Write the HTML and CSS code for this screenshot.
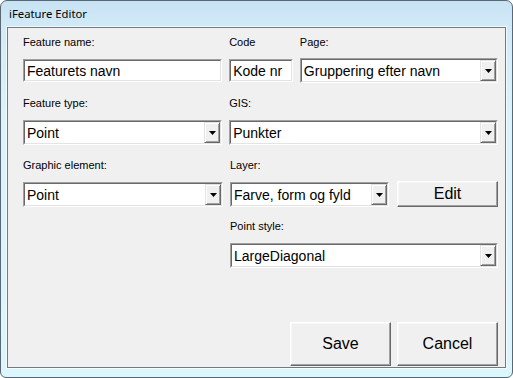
FILE: index.html
```html
<!DOCTYPE html>
<html>
<head>
<meta charset="utf-8">
<title>iFeature Editor</title>
<link rel="stylesheet" href="styles.css">
</head>
<body>
<div class="window">
  <div class="titlebar">iFeature Editor</div>
  <div class="client">
    <div class="row row-1">
      <div class="field w-main">
        <div class="label">Feature name:</div>
        <div class="textbox"><div class="inner"><span class="value">Featurets navn</span></div></div>
      </div>
      <div class="field w-code">
        <div class="label">Code</div>
        <div class="textbox"><div class="inner"><span class="value">Kode nr</span></div></div>
      </div>
      <div class="field w-page">
        <div class="label">Page:</div>
        <div class="combo up"><div class="inner"><span class="value">Gruppering efter navn</span><span class="arrow"><svg width="7" height="4" viewBox="0 0 7 4"><polygon points="0,0 7,0 3.5,4" fill="#000"/></svg></span></div></div>
      </div>
    </div>
    <div class="row row-2">
      <div class="field w-main">
        <div class="label">Feature type:</div>
        <div class="combo"><div class="inner"><span class="value">Point</span><span class="arrow"><svg width="7" height="4" viewBox="0 0 7 4"><polygon points="0,0 7,0 3.5,4" fill="#000"/></svg></span></div></div>
      </div>
      <div class="field w-wide">
        <div class="label">GIS:</div>
        <div class="combo"><div class="inner"><span class="value">Punkter</span><span class="arrow"><svg width="7" height="4" viewBox="0 0 7 4"><polygon points="0,0 7,0 3.5,4" fill="#000"/></svg></span></div></div>
      </div>
    </div>
    <div class="row row-3">
      <div class="field w-main">
        <div class="label">Graphic element:</div>
        <div class="combo"><div class="inner"><span class="value">Point</span><span class="arrow"><svg width="7" height="4" viewBox="0 0 7 4"><polygon points="0,0 7,0 3.5,4" fill="#000"/></svg></span></div></div>
      </div>
      <div class="field w-layer">
        <div class="label">Layer:</div>
        <div class="combo"><div class="inner"><span class="value">Farve, form og fyld</span><span class="arrow"><svg width="7" height="4" viewBox="0 0 7 4"><polygon points="0,0 7,0 3.5,4" fill="#000"/></svg></span></div></div>
      </div>
      <div class="edit-cell">
        <button class="btn btn-edit">Edit</button>
      </div>
    </div>
    <div class="row row-4">
      <div class="field w-wide offset">
        <div class="label">Point style:</div>
        <div class="combo"><div class="inner"><span class="value">LargeDiagonal</span><span class="arrow"><svg width="7" height="4" viewBox="0 0 7 4"><polygon points="0,0 7,0 3.5,4" fill="#000"/></svg></span></div></div>
      </div>
    </div>
    <div class="buttons">
      <button class="btn btn-big">Save</button>
      <button class="btn btn-big">Cancel</button>
    </div>
  </div>
</div>
</body>
</html>
```
FILE: styles.css
```css
html, body {
  margin: 0;
  padding: 0;
  background: #ffffff;
}

.window {
  box-sizing: border-box;
  width: 513px;
  height: 378px;
  border: 1px solid #5a6873;
  border-radius: 7px 7px 6px 6px;
  padding: 0 6px 9px 6px;
  background: linear-gradient(to bottom, #c7e2f3 0px, #d3ebf8 28px, #dbf3fb 120px, #dcf6fd 100%);
  display: flex;
  flex-direction: column;
}

.titlebar {
  height: 26px;
  box-sizing: border-box;
  padding: 5px 0 0 2px;
  font-family: "Noto Sans", "Open Sans", sans-serif;
  font-size: 11.3px;
  line-height: 15px;
  color: #000;
}

.client {
  box-sizing: border-box;
  height: 341px;
  border: 1px solid #6f7a83;
  box-shadow: 0 0 0 1px rgba(255, 255, 255, 0.7);
  background: #f0f0f0;
  padding: 8px 7px 1px 15px;
  display: flex;
  flex-direction: column;
  font-family: "Liberation Sans", Arial, sans-serif;
  color: #000;
}

.row {
  display: flex;
  align-items: flex-start;
}
.row-1 { height: 61px; }
.row-2 { height: 62px; }
.row-3 { height: 61px; }

.field {
  display: flex;
  flex-direction: column;
}
.field + .field { margin-left: 7px; }

.w-main { width: 200px; }
.w-code { width: 64px; }
.w-page { width: 199px; }
.w-wide { width: 270px; }
.w-layer { width: 159px; }
.offset { margin-left: 207px; }

.label {
  height: 13px;
  font-size: 11px;
  line-height: 13px;
  margin-bottom: 10px;
  white-space: nowrap;
}

.textbox, .combo {
  box-sizing: border-box;
  border: 1px solid;
  border-color: #a0a0a0 #ffffff #ffffff #a0a0a0;
  background: #ffffff;
  display: flex;
}
.textbox { height: 23px; }
.combo { height: 25px; }
.combo.up { margin-top: -1px; }

.inner {
  flex: 1;
  display: flex;
  align-items: stretch;
  border: 1px solid;
  border-color: #696969 #e3e3e3 #e3e3e3 #696969;
  min-width: 0;
}

.value {
  flex: 1;
  display: flex;
  align-items: center;
  padding-left: 2px;
  font-size: 14px;
  line-height: 16px;
  white-space: nowrap;
  overflow: hidden;
}

.arrow {
  box-sizing: border-box;
  width: 16px;
  flex: none;
  background: #f0f0f0;
  border: 1px solid;
  border-color: #e3e3e3 #696969 #696969 #e3e3e3;
  box-shadow: inset 1px 1px 0 #ffffff, inset -1px -1px 0 #a0a0a0;
  display: flex;
  align-items: center;
  justify-content: center;
}
.arrow svg { display: block; }

.edit-cell {
  margin-left: 8px;
  padding-top: 22px;
}

.btn {
  box-sizing: border-box;
  margin: 0;
  padding: 0;
  background: #f0f0f0;
  border: 1px solid;
  border-color: #ffffff #696969 #696969 #ffffff;
  box-shadow: inset -1px -1px 0 #a0a0a0, inset 1px 1px 0 #f8f8f8;
  font-family: "Liberation Sans", Arial, sans-serif;
  font-size: 16px;
  color: #000;
  display: flex;
  align-items: center;
  justify-content: center;
}

.btn-edit {
  width: 101px;
  height: 26px;
}

.buttons {
  margin-top: auto;
  display: flex;
  justify-content: flex-end;
  gap: 6px;
}

.btn-big {
  width: 101px;
  height: 44px;
}
```
